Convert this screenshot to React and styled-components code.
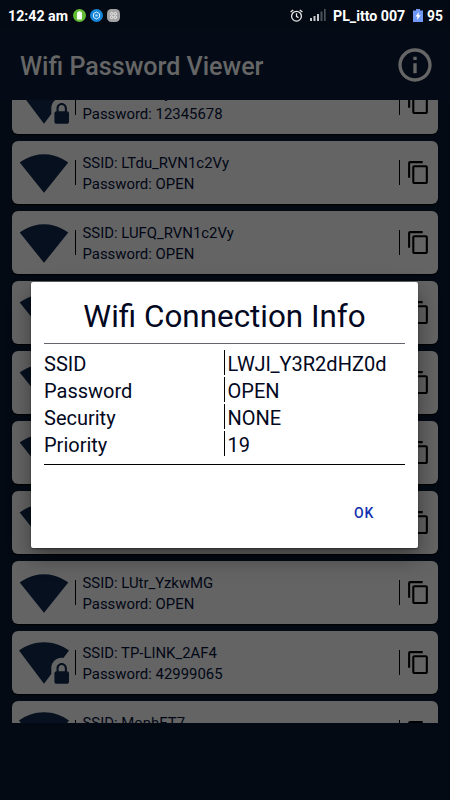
import React from 'react';
import styled, { createGlobalStyle } from 'styled-components';

const GlobalStyle = createGlobalStyle`
  * {
    box-sizing: border-box;
  }

  body {
    margin: 0;
    background-color: #030a14;
    font-family: Roboto, sans-serif;
  }
`;

const Screen = styled.div`
  position: relative;
  width: 450px;
  height: 800px;
  overflow: hidden;
  background-color: #030a14;
`;

const StatusBar = styled.div`
  display: flex;
  align-items: center;
  height: 30px;
  padding: 0 8px;
  color: #ffffff;
  font-size: 13.8px;
  font-weight: bold;
  white-space: nowrap;
`;

const Clock = styled.span`
  padding-top: 1px;
  font-size: 14.2px;
  width: 65px;
`;

const StatusIcons = styled.div`
  display: flex;
  gap: 4px;
  flex: 1;
`;

const StatusIcon = styled.svg`
  display: block;
  width: ${props => props.$width || 13}px;
  height: ${props => props.$height || 13}px;
  margin-right: ${props => props.$gap || 0}px;
`;

const Carrier = styled.span`
  width: 80px;
  padding-top: 1px;
  font-size: 14.2px;
`;

const Battery = styled.span`
  width: 15px;
  padding-top: 1px;
`;

const AppBar = styled.header`
  display: flex;
  align-items: center;
  justify-content: space-between;
  height: 70px;
  padding: 0 15px 0 20px;
  background-color: #040b16;
  color: #666666;
`;

const AppTitle = styled.h1`
  margin: 3px 0 0;
  font-size: 25.1px;
  font-weight: 500;
`;

const InfoIcon = styled.svg`
  width: 40px;
  height: 40px;
  fill: currentColor;
`;

const NetworkList = styled.div`
  height: 623px;
  padding: 0 12px;
  overflow: hidden;
`;

const ScrolledItems = styled.div`
  display: flex;
  flex-direction: column;
  gap: 7px;
  margin-top: -29px;
`;

const NetworkCard = styled.div`
  display: flex;
  align-items: center;
  flex-shrink: 0;
  height: 63px;
  padding: 0 7px;
  border-radius: 6px;
  background-color: #646464;
  box-shadow: 0 1px 1px #000000;
`;

const WifiIcon = styled.svg`
  width: 50px;
  height: 50px;
  fill: #06101f;
`;

const Divider = styled.div`
  width: 1px;
  height: 25px;
  margin-left: ${props => props.$space}px;
  background-color: #000000;
`;

const NetworkText = styled.div`
  flex: 1;
  padding: 2px 0 0 6.5px;
  color: #020716;
  font-size: 14.9px;
  line-height: 21px;
`;

const CopyIcon = styled.svg`
  width: 25px;
  height: 25px;
  margin-left: 6px;
  fill: #000000;
`;

const Dialog = styled.div`
  position: absolute;
  top: 282px;
  left: 31px;
  width: 387px;
  height: 266px;
  padding: 0 13px;
  border-radius: 2px;
  background-color: #ffffff;
  box-shadow: 0 9px 22px rgba(0, 0, 0, 0.4), 0 1px 2px rgba(0, 0, 0, 0.4);
  color: #020821;
`;

const DialogTitle = styled.h2`
  margin: 0;
  padding-top: 5px;
  height: 61px;
  font-size: 31.4px;
  font-weight: normal;
  line-height: 60px;
  text-align: center;
`;

const Details = styled.div`
  height: 122px;
  padding-top: 6px;
  border-top: 1px solid #646470;
  border-bottom: 1px solid #000000;
`;

const DetailRow = styled.div`
  display: grid;
  grid-template-columns: 180px 1fr;
  height: 27px;
  font-size: 20px;
  line-height: 29px;
`;

const DetailValue = styled.div`
  height: 25px;
  padding-left: 2.5px;
  border-left: 1px solid #000000;
`;

const DialogActions = styled.div`
  display: flex;
  justify-content: flex-end;
  padding: 30px 13px 0;
`;

const OkButton = styled.button`
  height: 36px;
  padding: 0 18px;
  border: none;
  background: none;
  color: #1230ae;
  font-family: inherit;
  font-size: 14px;
  font-weight: 500;
  letter-spacing: 0.7px;
`;

const openPath = 'M12.01 21.49L23.64 7c-.45-.34-4.93-4-11.64-4C5.28 3 .81 6.66.36 7l11.63 14.49.01.01.01-.01z';
const lockedPath = 'M20.5 9.5c.28 0 .55.04.81.08L24 6c-3.34-2.51-7.5-4-12-4S3.34 3.49 0 6l12 16 3.5-4.67V14.5c0-2.76 2.24-5 5-5zM23 16v-1.5c0-1.38-1.12-2.5-2.5-2.5S18 13.12 18 14.5V16c-.55 0-1 .45-1 1v4c0 .55.45 1 1 1h5c.55 0 1-.45 1-1v-4c0-.55-.45-1-1-1zm-1 0h-3v-1.5c0-.83.67-1.5 1.5-1.5s1.5.67 1.5 1.5V16z';

const networks = [
    { ssid: 'TheCity', password: '12345678', locked: true },
    { ssid: 'LTdu_RVN1c2Vy', password: 'OPEN' },
    { ssid: 'LUFQ_RVN1c2Vy', password: 'OPEN' },
    { ssid: 'LWJl_Y3R2dHZ0d', password: 'OPEN' },
    { ssid: 'LWJl_Y3R2dHZ0d', password: 'OPEN' },
    { ssid: 'LWJl_Y3R2dHZ0d', password: 'OPEN' },
    { ssid: 'LWJl_Y3R2dHZ0d', password: 'OPEN' },
    { ssid: 'LUtr_YzkwMG', password: 'OPEN' },
    { ssid: 'TP-LINK_2AF4', password: '42999065', locked: true },
    { ssid: 'MonhET7', password: '12345678', locked: true }
];

const details = [
    { label: 'SSID', value: 'LWJl_Y3R2dHZ0d' },
    { label: 'Password', value: 'OPEN' },
    { label: 'Security', value: 'NONE' },
    { label: 'Priority', value: '19' }
];

const App = () => {
    return (
        <Screen>
            <GlobalStyle />
            <StatusBar>
                <Clock>12:42 am</Clock>
                <StatusIcons>
                    <StatusIcon viewBox="0 0 13 13">
                        <circle cx="6.5" cy="6.5" r="6.5" fill="#62bd35" />
                        <path d="M5.3 2.2h2.4v1H9v7.3H4V3.2h1.3z" fill="#f4fff0" />
                    </StatusIcon>
                    <StatusIcon viewBox="0 0 13 13">
                        <circle cx="6.5" cy="6.5" r="6.5" fill="#1586d8" />
                        <path d="M6.5 3l3 1.7v3.6l-3 1.7-3-1.7V4.7z" fill="none" stroke="#d8efff" strokeWidth="1" />
                        <path d="M5.3 5.5h2.4v2H5.3z" fill="#a8d8ff" />
                    </StatusIcon>
                    <StatusIcon viewBox="0 0 13 13">
                        <rect width="13" height="13" rx="4.5" fill="#a2a2a2" />
                        <g fill="none" stroke="#f2f2f2" strokeWidth="0.9">
                            <circle cx="4.7" cy="4.7" r="1.3" />
                            <circle cx="8.3" cy="4.7" r="1.3" />
                            <circle cx="4.7" cy="8.3" r="1.3" />
                            <circle cx="8.3" cy="8.3" r="1.3" />
                        </g>
                    </StatusIcon>
                </StatusIcons>
                <StatusIcon viewBox="0 0 13 13" $gap={7}>
                    <g fill="none" stroke="#e8e8e8" strokeWidth="1.3">
                        <circle cx="6.5" cy="7.2" r="4.9" />
                        <path d="M6.5 4.2v3.2l2 1.3M.6 3L3.2.9M12.4 3L9.8.9" />
                    </g>
                </StatusIcon>
                <StatusIcon viewBox="0 0 16 12" $width={16} $height={12} $gap={7}>
                    <path d="M0 9h2v3H0zM3.5 7h2v5h-2zM7 5h2v7H7z" fill="#c8cacc" />
                    <path d="M10.5 2.5h2V12h-2zM14 0h1.7v12H14z" fill="#4c5057" />
                </StatusIcon>
                <Carrier>PL_itto 007</Carrier>
                <StatusIcon viewBox="0 0 10 13" $width={10} $height={13} $gap={4}>
                    <path d="M3 0h4v1.5h3V13H0V1.5h3z" fill="#7199f8" />
                    <path d="M6 3L2.5 7.5h2L4 11l3.7-4.8H5.5z" fill="#ffffff" />
                </StatusIcon>
                <Battery>95</Battery>
            </StatusBar>
            <AppBar>
                <AppTitle>Wifi Password Viewer</AppTitle>
                <InfoIcon viewBox="0 0 24 24">
                    <path d="M11 7h2v2h-2zm0 4h2v6h-2zm1-9C6.48 2 2 6.48 2 12s4.48 10 10 10 10-4.48 10-10S17.52 2 12 2zm0 18c-4.41 0-8-3.59-8-8s3.59-8 8-8 8 3.59 8 8-3.59 8-8 8z" />
                </InfoIcon>
            </AppBar>
            <NetworkList>
                <ScrolledItems>
                    {networks.map((network, index) => (
                        <NetworkCard key={index}>
                            <WifiIcon viewBox="0 0 24 24">
                                <path d={network.locked ? lockedPath : openPath} />
                            </WifiIcon>
                            <Divider $space={6} />
                            <NetworkText>
                                <div>SSID: {network.ssid}</div>
                                <div>Password: {network.password}</div>
                            </NetworkText>
                            <Divider $space={0} />
                            <CopyIcon viewBox="0 0 24 24">
                                <path d="M16 1H4c-1.1 0-2 .9-2 2v14h2V3h12V1zm3 4H8c-1.1 0-2 .9-2 2v14c0 1.1.9 2 2 2h11c1.1 0 2-.9 2-2V7c0-1.1-.9-2-2-2zm0 16H8V7h11v14z" />
                            </CopyIcon>
                        </NetworkCard>
                    ))}
                </ScrolledItems>
            </NetworkList>
            <Dialog>
                <DialogTitle>Wifi Connection Info</DialogTitle>
                <Details>
                    {details.map((detail) => (
                        <DetailRow key={detail.label}>
                            <div>{detail.label}</div>
                            <DetailValue>{detail.value}</DetailValue>
                        </DetailRow>
                    ))}
                </Details>
                <DialogActions>
                    <OkButton>OK</OkButton>
                </DialogActions>
            </Dialog>
        </Screen>
    );
};

export default App;
